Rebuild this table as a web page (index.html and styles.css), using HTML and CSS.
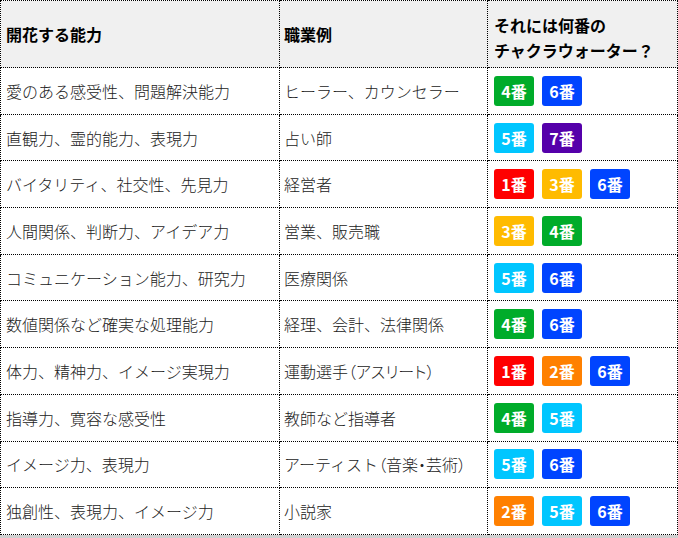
FILE: index.html
```html
<!DOCTYPE html>
<html lang="ja">
<head>
<meta charset="utf-8">
<link rel="stylesheet" href="styles.css">
</head>
<body>
<table class="chakra">
  <colgroup><col class="c1"><col class="c2"><col class="c3"></colgroup>
  <thead>
    <tr><th>開花する能力</th><th>職業例</th><th class="q">それには何番の<br>チャクラウォーター？</th></tr>
  </thead>
  <tbody>
    <tr><td>愛のある感受性、問題解決能力</td><td>ヒーラー、カウンセラー</td><td><span class="b g">4番</span><span class="b bl">6番</span></td></tr>
    <tr><td>直観力、霊的能力、表現力</td><td>占い師</td><td><span class="b c">5番</span><span class="b p">7番</span></td></tr>
    <tr><td>バイタリティ、社交性、先見力</td><td>経営者</td><td><span class="b r">1番</span><span class="b y">3番</span><span class="b bl">6番</span></td></tr>
    <tr><td>人間関係、判断力、アイデア力</td><td>営業、販売職</td><td><span class="b y">3番</span><span class="b g">4番</span></td></tr>
    <tr><td>コミュニケーション能力、研究力</td><td>医療関係</td><td><span class="b c">5番</span><span class="b bl">6番</span></td></tr>
    <tr><td>数値関係など確実な処理能力</td><td>経理、会計、法律関係</td><td><span class="b g">4番</span><span class="b bl">6番</span></td></tr>
    <tr><td>体力、精神力、イメージ実現力</td><td>運動選手<span class="pt">（アスリート）</span></td><td><span class="b r">1番</span><span class="b o">2番</span><span class="b bl">6番</span></td></tr>
    <tr><td>指導力、寛容な感受性</td><td>教師など指導者</td><td><span class="b g">4番</span><span class="b c">5番</span></td></tr>
    <tr><td>イメージ力、表現力</td><td>アーティスト<span class="pt">（音楽・芸術）</span></td><td><span class="b c">5番</span><span class="b bl">6番</span></td></tr>
    <tr><td>独創性、表現力、イメージ力</td><td>小説家</td><td><span class="b o">2番</span><span class="b c">5番</span><span class="b bl">6番</span></td></tr>
  </tbody>
</table>
</body>
</html>
```
FILE: styles.css
```css
html { background: #d0d0d0; }
body {
  margin: 0;
  font-family: "Noto Sans CJK JP", sans-serif;
  font-size: 16px;
  color: #222;
}
.chakra {
  border-collapse: collapse;
  width: 677px;
  background: #fff;
  table-layout: fixed;
}
.c1 { width: 279px; }
.c2 { width: 208px; }
.c3 { width: 190px; }
.chakra th, .chakra td {
  border: 1px dotted #000;
  text-align: left;
  vertical-align: middle;
  padding: 0 6px;
  white-space: nowrap;
}
.chakra td { font-weight: 300; }
.chakra td:first-child, .chakra th:first-child { padding-left: 5px; }
.chakra td:nth-child(2), .chakra th:nth-child(2) { padding-left: 4px; }
.chakra th {
  background: #f0f0f0;
  height: 66px;
  font-weight: bold;
  color: #000;
  line-height: 25px;
}
.chakra th.q { vertical-align: top; padding-top: 12px; height: 54px; }
.pt { font-feature-settings: "palt"; }
.chakra td { height: 45.7px; }
.chakra td:nth-child(3) { padding-left: 6px; font-size: 0; }
.b {
  display: inline-block;
  width: 40px;
  height: 30px;
  line-height: 30px;
  border-radius: 3px;
  margin-right: 8px;
  color: #fff;
  font-weight: bold;
  font-size: 16px;
  text-align: center;
  vertical-align: middle;
}
.g { background: #00ac2a; }
.bl { background: #0044ff; }
.c { background: #00c6ff; }
.p { background: #5500aa; }
.r { background: #ff0000; }
.y { background: #ffbb00; }
.o { background: #ff8000; }
```
